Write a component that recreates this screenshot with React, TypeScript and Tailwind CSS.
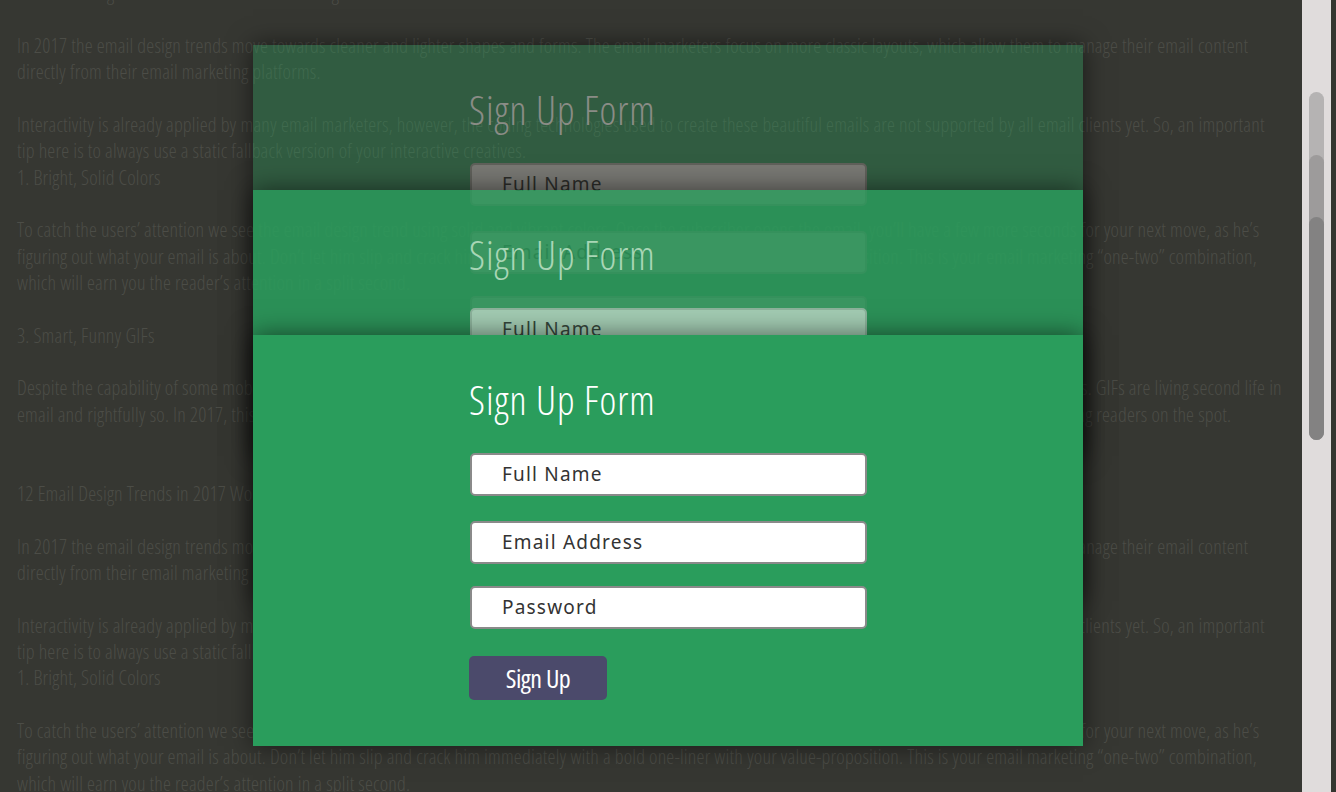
const block = [
  '12 Email Design Trends in 2017 Worth Following',
  '',
  'In 2017 the email design trends move towards cleaner and lighter shapes and forms. The email marketers focus on more classic layouts, which allow them to manage their email content',
  'directly from their email marketing platforms.',
  '',
  'Interactivity is already applied by many email marketers, however, the coding technologies used to create these beautiful emails are not supported by all email clients yet. So, an important',
  'tip here is to always use a static fallback version of your interactive creatives.',
  '1. Bright, Solid Colors',
  '',
  'To catch the users’ attention we see the email design trend using solid and vibrant colors. Once the subscriber opens the email, you’ll have a few more seconds for your next move, as he’s',
  'figuring out what your email is about. Don’t let him slip and crack him immediately with a bold one-liner with your value-proposition. This is your email marketing “one-two” combination,',
  'which will earn you the reader’s attention in a split second.',
  '',
  '3. Smart, Funny GIFs',
  '',
  'Despite the capability of some mobile email clients to show only the very first frame of an animation, more and more brands still keep on sending animated GIFs. GIFs are living second life in',
  'email and rightfully so. In 2017, this trend will only grow stronger, with witty loops, playful product demos and subtle cinemagraphs really surprising and catching readers on the spot.',
  '',
  '',
]

const skins = {
  back: {
    bg: 'bg-[rgba(42,157,92,0.36)]',
    title: 'text-[#8a8c86]',
    field: 'bg-[#787873] border-[#5f605a] text-[#2b2c29]',
    button: 'bg-[rgba(75,74,107,0.4)] text-[#8a8c86]',
  },
  middle: {
    bg: 'bg-[rgba(42,157,92,0.8)] -mt-[266px]',
    title: 'text-[#a9d6b6]',
    field: 'bg-[#a2cbb2] border-[#8cb29b] text-[#34453a]',
    button: 'bg-[rgba(75,74,107,0.8)] text-[#a9d6b6]',
  },
  front: {
    bg: 'bg-[#2a9d5c] -mt-[266px]',
    title: 'text-white',
    field: 'bg-white border-[#8a8a8a] text-[#333333]',
    button: 'bg-[#4b4a6b] text-white',
  },
}

type Skin = (typeof skins)['front']

const Field = ({ label, skin, gap }: { label: string; skin: Skin; gap: string }) => (
  <div
    className={`${gap} ml-[1px] flex h-[43px] w-[397px] items-center rounded-[5px] border-2 pl-[30px] font-['Noto_Sans',sans-serif] text-[19px] tracking-[1.2px] ${skin.field}`}
  >
    {label}
  </div>
)

const SignUpPanel = ({ skin }: { skin: Skin }) => (
  <div className={`relative h-[411px] w-[830px] shadow-[0_0_24px_rgba(0,0,0,0.55)] ${skin.bg}`}>
    <div className="pl-[216px] pt-[41px]">
      <h2 className={`font-['Open_Sans',sans-serif] text-[40px] font-light leading-[48px] tracking-[1px] [font-stretch:75%] ${skin.title}`}>
        Sign Up Form
      </h2>
      <Field label="Full Name" skin={skin} gap="mt-[29px]" />
      <Field label="Email Address" skin={skin} gap="mt-[25px]" />
      <Field label="Password" skin={skin} gap="mt-[22px]" />
      <button
        className={`mt-[27px] flex h-[44px] w-[138px] items-center justify-center rounded-[5px] font-['Open_Sans',sans-serif] text-[26px] tracking-[-0.5px] [font-stretch:75%] ${skin.button}`}
      >
        Sign Up
      </button>
    </div>
  </div>
)

export default function App() {
  const lines = [...block, ...block]

  return (
    <div className="relative flex h-[792px] w-full overflow-hidden bg-[#363732]">
      <main className="-mt-[20px] flex-1 overflow-hidden pl-[17px] font-['Open_Sans',sans-serif] text-[20px] font-light tracking-[0.2px] text-[#4c4d47] [font-stretch:75%]">
        {lines.map((line, i) => (
          <div key={i} className="h-[26.37px] whitespace-nowrap leading-[26.37px]">
            {line}
          </div>
        ))}
      </main>

      <div className="w-[29px] shrink-0 bg-[#e0dcdc] px-[7px] pt-[92px]">
        <div className="flex h-[348px] flex-col justify-end rounded-full bg-[#b5b3b3]">
          <div className="flex h-[285px] flex-col justify-end rounded-full bg-[#9d9b9b]">
            <div className="h-[223px] rounded-full bg-[#838282]" />
          </div>
        </div>
      </div>
      <div className="w-[5px] shrink-0 bg-[#34352f]" />

      <div className="pointer-events-none absolute left-[253px] top-[45px] flex flex-col">
        <SignUpPanel skin={skins.back} />
        <SignUpPanel skin={skins.middle} />
        <SignUpPanel skin={skins.front} />
      </div>
    </div>
  )
}
